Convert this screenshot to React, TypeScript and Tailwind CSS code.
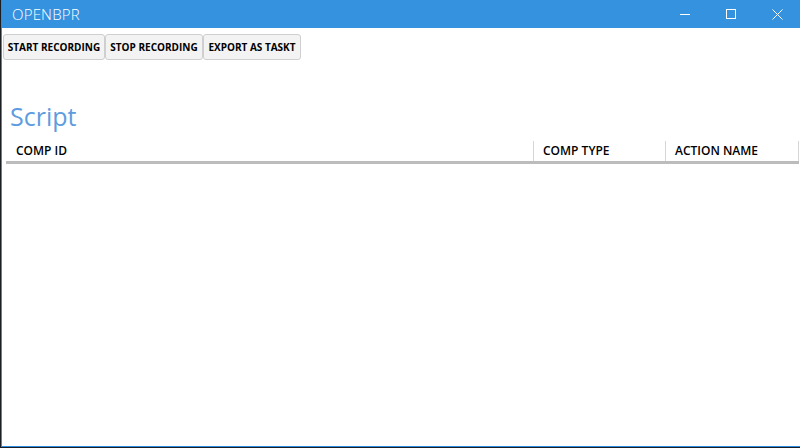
import { useState } from 'react'

type Row = {
  compId: string
  compType: string
  actionName: string
}

const font = { fontFamily: '"Segoe UI", "Open Sans", "Noto Sans", sans-serif' }

export default function App() {
  const [recording, setRecording] = useState(false)
  const [rows] = useState<Row[]>([])

  return (
    <div className="w-[800px] h-[448px] bg-[#1b1f24] overflow-hidden" style={font}>
      <div className="ml-px mb-px h-[447px] flex flex-col bg-[#2f8de0] pl-px pb-px">
        <div className="h-[28px] flex items-center bg-[#3592df] text-white shrink-0">
          <div className="pl-[10px] text-[15px] font-light tracking-[0.2px]">OPENBPR</div>
          <div className="ml-auto flex h-full">
            <button className="w-[46px] h-full flex items-center justify-center">
              <svg width="10" height="10" viewBox="0 0 10 10">
                <path d="M0 5.5H10" stroke="white" strokeWidth="1" />
              </svg>
            </button>
            <button className="w-[46px] h-full flex items-center justify-center">
              <svg width="10" height="10" viewBox="0 0 10 10">
                <rect x="0.5" y="0.5" width="9" height="9" fill="none" stroke="white" strokeWidth="1" />
              </svg>
            </button>
            <button className="w-[46px] h-full flex items-center justify-center">
              <svg width="11" height="11" viewBox="0 0 11 11">
                <path d="M0.5 0.5L10.5 10.5M10.5 0.5L0.5 10.5" stroke="white" strokeWidth="1" />
              </svg>
            </button>
          </div>
        </div>

        <div className="flex-1 bg-white flex flex-col">
          <div className="flex pl-[1px] pt-[6px]">
            <button
              onClick={() => setRecording(true)}
              className="h-[26px] w-[102px] rounded-[3px] border border-[#cfcfcf] bg-[#f3f3f3] text-[10px] font-bold text-black"
            >
              START RECORDING
            </button>
            <button
              onClick={() => setRecording(false)}
              className="h-[26px] w-[98px] rounded-[3px] border border-[#cfcfcf] bg-[#f3f3f3] text-[10px] font-bold text-black"
            >
              STOP RECORDING
            </button>
            <button className="h-[26px] w-[98px] rounded-[3px] border border-[#cfcfcf] bg-[#f3f3f3] text-[10px] font-bold text-black">
              EXPORT AS TASKT
            </button>
          </div>

          <div className="pl-[8px] mt-[40px] text-[25px] leading-[32px] text-[#5e9ce0]">
            Script{recording ? '' : ''}
          </div>

          <div className="ml-[4px] mr-[1px] mt-[9px] flex h-[23px] border-b-[3px] border-[#bcbcbc] text-[12px] font-semibold text-black">
            <div className="w-[528px] flex items-center pl-[10px] border-r border-[#d6d6d6]">COMP ID</div>
            <div className="w-[132px] flex items-center pl-[9px] border-r border-[#d6d6d6]">COMP TYPE</div>
            <div className="flex-1 flex items-center pl-[9px] border-r border-[#d6d6d6]">ACTION NAME</div>
          </div>

          {rows.map((row) => (
            <div key={row.compId} className="ml-[4px] flex text-[12px]">
              <div className="w-[528px] pl-[10px]">{row.compId}</div>
              <div className="w-[132px] pl-[9px]">{row.compType}</div>
              <div className="flex-1 pl-[9px]">{row.actionName}</div>
            </div>
          ))}
        </div>
      </div>
    </div>
  )
}
